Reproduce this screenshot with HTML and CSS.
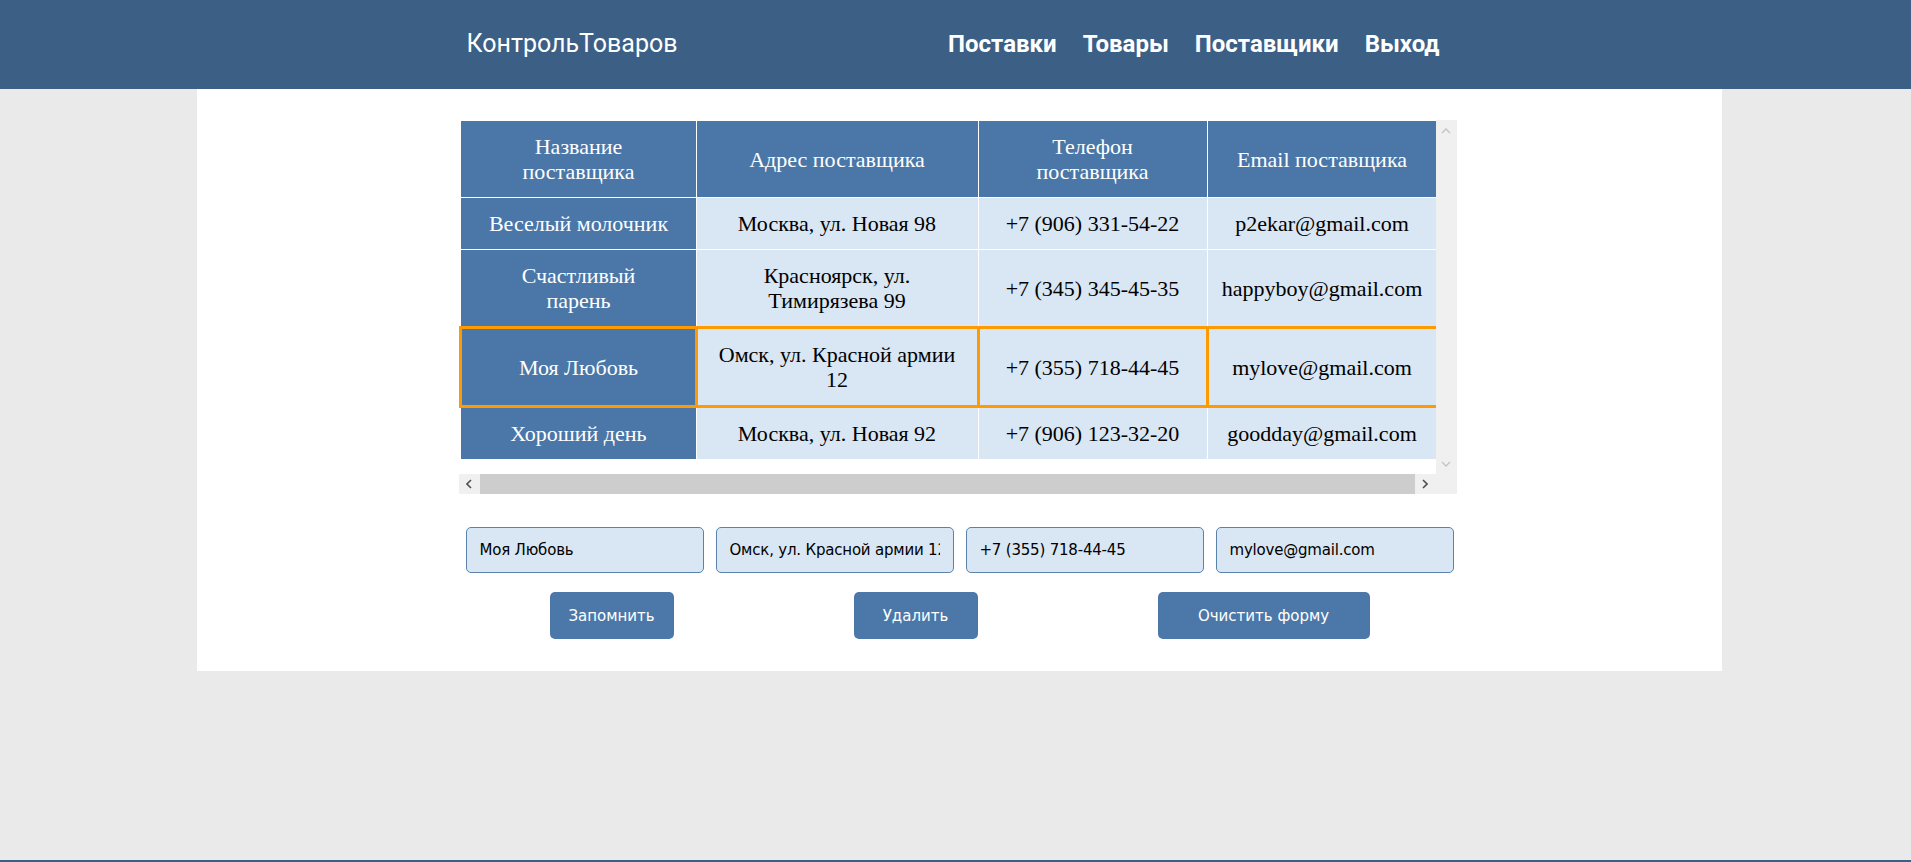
FILE: index.html
```html
<!DOCTYPE html>
<html lang="ru">
<head>
<meta charset="utf-8">
<title>КонтрольТоваров — Поставщики</title>
<link rel="stylesheet" href="styles.css">
</head>
<body>
<header class="topbar">
  <div class="column">
    <div class="inner topbar-inner">
      <div class="logo">КонтрольТоваров</div>
      <nav class="nav">
        <a class="nav-link" href="#">Поставки</a>
        <a class="nav-link" href="#">Товары</a>
        <a class="nav-link" href="#">Поставщики</a>
        <a class="nav-link" href="#">Выход</a>
      </nav>
    </div>
  </div>
</header>

<main class="column panel">
  <div class="inner">
    <div class="scrollbox">
      <div class="viewport">
        <table class="suppliers">
          <colgroup>
            <col class="c1"><col class="c2"><col class="c3"><col class="c4">
          </colgroup>
          <thead>
            <tr>
              <th class="first">Название поставщика</th>
              <th>Адрес поставщика</th>
              <th class="third">Телефон поставщика</th>
              <th>Email поставщика</th>
            </tr>
          </thead>
          <tbody>
            <tr>
              <td class="first">Веселый молочник</td>
              <td>Москва, ул. Новая 98</td>
              <td class="third">+7 (906) 331-54-22</td>
              <td>p2ekar@gmail.com</td>
            </tr>
            <tr>
              <td class="first">Счастливый парень</td>
              <td>Красноярск, ул. Тимирязева 99</td>
              <td class="third">+7 (345) 345-45-35</td>
              <td>happyboy@gmail.com</td>
            </tr>
            <tr class="selected">
              <td class="first">Моя Любовь</td>
              <td>Омск, ул. Красной армии 12</td>
              <td class="third">+7 (355) 718-44-45</td>
              <td>mylove@gmail.com</td>
            </tr>
            <tr>
              <td class="first">Хороший день</td>
              <td>Москва, ул. Новая 92</td>
              <td class="third">+7 (906) 123-32-20</td>
              <td>goodday@gmail.com</td>
            </tr>
          </tbody>
        </table>
      </div>
      <div class="vbar">
        <span class="sb-btn">
          <svg width="10" height="6" viewBox="0 0 10 6"><path d="M1 5 L5 1 L9 5" fill="none" stroke="#c3c3c3" stroke-width="1.3"/></svg>
        </span>
        <span class="sb-btn">
          <svg width="10" height="6" viewBox="0 0 10 6"><path d="M1 1 L5 5 L9 1" fill="none" stroke="#c3c3c3" stroke-width="1.3"/></svg>
        </span>
      </div>
      <div class="hbar">
        <span class="sb-btn">
          <svg width="6" height="10" viewBox="0 0 6 10"><path d="M5 1 L1 5 L5 9" fill="none" stroke="#505050" stroke-width="1.6"/></svg>
        </span>
        <span class="thumb"></span>
        <span class="sb-btn">
          <svg width="6" height="10" viewBox="0 0 6 10"><path d="M1 1 L5 5 L1 9" fill="none" stroke="#505050" stroke-width="1.6"/></svg>
        </span>
      </div>
      <div class="corner"></div>
    </div>

    <form class="editor">
      <div class="fields">
        <input class="field" type="text" value="Моя Любовь">
        <input class="field" type="text" value="Омск, ул. Красной армии 12">
        <input class="field" type="text" value="+7 (355) 718-44-45">
        <input class="field" type="text" value="mylove@gmail.com">
      </div>
      <div class="actions">
        <button class="btn btn-small" type="button">Запомнить</button>
        <button class="btn btn-small" type="button">Удалить</button>
        <button class="btn btn-wide" type="button">Очистить форму</button>
      </div>
    </form>
  </div>
</main>

<footer class="footer"></footer>
</body>
</html>
```

FILE: styles.css
```css
* {
  box-sizing: border-box;
}

html, body {
  margin: 0;
  padding: 0;
}

body {
  min-height: 100vh;
  display: flex;
  flex-direction: column;
  background: #eaeaea;
  font-family: "Liberation Serif", "Times New Roman", serif;
}

.column {
  width: 1525px;
  margin-left: 197px;
}

.inner {
  width: 1000px;
  margin: 0 auto;
}

/* Header */
.topbar {
  background: #3c5f86;
  height: 89px;
  flex-shrink: 0;
}

.topbar-inner {
  height: 89px;
  display: flex;
  align-items: center;
  justify-content: space-between;
  padding: 0 20px 0 7px;
}

.logo {
  font-family: Roboto, "Liberation Sans", sans-serif;
  font-size: 25px;
  color: #ffffff;
  padding-bottom: 2px;
}

.nav {
  display: flex;
  gap: 26px;
  padding-bottom: 2px;
}

.nav-link {
  font-family: Roboto, "Liberation Sans", sans-serif;
  font-weight: 700;
  font-size: 24px;
  color: #ffffff;
  text-decoration: none;
}

/* Panel */
.panel {
  background: #ffffff;
  padding: 31px 0 32px;
}

/* Scroll box with table */
.scrollbox {
  width: 998px;
  margin-left: -1px;
  display: grid;
  grid-template-columns: 977px 21px;
  grid-template-rows: 354px 20px;
}

.viewport {
  overflow: hidden;
  background: #ffffff;
}

.suppliers {
  width: 977px;
  table-layout: fixed;
  border-collapse: collapse;
  font-size: 22px;
  line-height: 25px;
  text-align: center;
}

.c1 { width: 236px; }
.c2 { width: 282px; }
.c3 { width: 229px; }
.c4 { width: 230px; }

.suppliers th,
.suppliers td {
  border: 1px solid #ffffff;
  padding: 13px 12px;
  vertical-align: middle;
}

.suppliers th {
  background: #4a77a8;
  color: #ffffff;
  font-weight: 400;
}

.suppliers td {
  background: #d9e6f3;
  color: #000000;
}

.suppliers .first {
  padding-left: 28px;
  padding-right: 27px;
}

.suppliers .third {
  padding-left: 20px;
  padding-right: 20px;
}

.suppliers td.first {
  background: #4a77a8;
  color: #ffffff;
}

.suppliers tr.selected td {
  border: 3px solid #ff9b00;
}

.vbar {
  background: #f0f0f0;
  display: flex;
  flex-direction: column;
  justify-content: space-between;
}

.hbar {
  background: #f0f0f0;
  display: flex;
  align-items: stretch;
}

.sb-btn {
  width: 21px;
  height: 21px;
  flex-shrink: 0;
  display: flex;
  align-items: center;
  justify-content: center;
}

.hbar .sb-btn {
  height: 20px;
}

.thumb {
  flex: 1;
  background: #cdcdcd;
}

.corner {
  background: #f0f0f0;
}

/* Editor form */
.editor {
  margin: 0;
}

.fields {
  display: flex;
  margin-top: 33px;
}

.field {
  width: 238px;
  height: 46px;
  margin: 0 6px;
  padding: 0 13px;
  background: #d9e6f3;
  border: 1px solid #5b82ad;
  border-radius: 5px;
  font-family: "DejaVu Sans", Verdana, sans-serif;
  font-size: 15px;
  letter-spacing: -0.2px;
  color: #000000;
  outline: none;
}

.actions {
  display: flex;
  justify-content: space-around;
  margin-top: 19px;
}

.btn {
  height: 47px;
  background: #4b78a8;
  border: none;
  border-radius: 5px;
  color: #ffffff;
  font-family: "DejaVu Sans", Verdana, sans-serif;
  font-size: 15px;
  padding: 0;
  cursor: pointer;
}

.btn-small {
  width: 124px;
}

.btn-wide {
  width: 212px;
}

/* Footer line */
.footer {
  margin-top: auto;
  height: 2px;
  background: #3c5f86;
  flex-shrink: 0;
}
```
